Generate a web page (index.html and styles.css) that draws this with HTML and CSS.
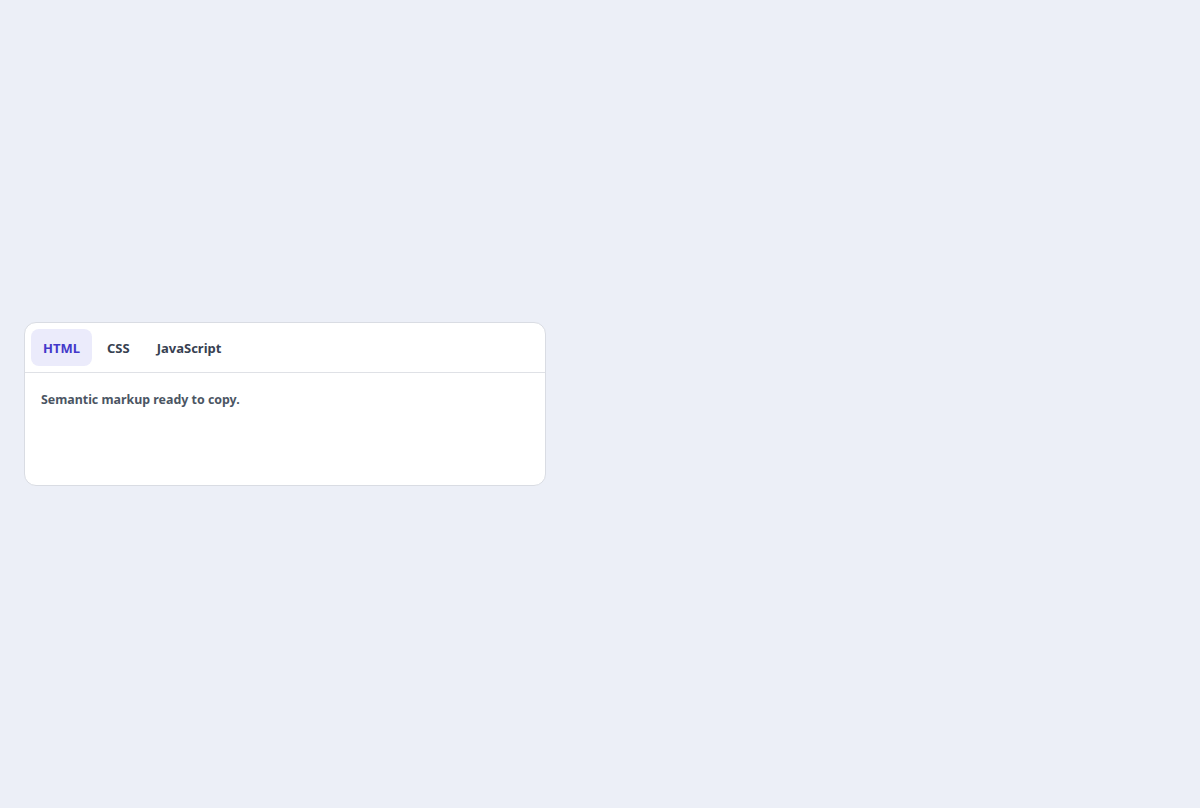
FILE: index.html
```html
<!DOCTYPE html>
<html lang="en">
<head>
<meta charset="utf-8">
<title>Tabs</title>
<link rel="stylesheet" href="styles.css">
</head>
<body>
<div class="card">
  <div class="tabs" role="tablist">
    <button class="tab active" role="tab" aria-selected="true">HTML</button>
    <button class="tab" role="tab">CSS</button>
    <button class="tab" role="tab">JavaScript</button>
  </div>
  <div class="panel" role="tabpanel">
    <p class="panel-text">Semantic markup ready to copy.</p>
  </div>
</div>
</body>
</html>
```
FILE: styles.css
```css
html, body {
  margin: 0;
  height: 100%;
}
body {
  background: #eceff7;
  font-family: "Noto Sans", sans-serif;
  display: flex;
  align-items: center;
  padding: 0 24px;
  box-sizing: border-box;
}
.card {
  width: 522px;
  height: 164px;
  box-sizing: border-box;
  background: #ffffff;
  border: 1px solid #d9dce3;
  border-radius: 12px;
  display: flex;
  flex-direction: column;
}
.tabs {
  display: flex;
  gap: 3px;
  padding: 6px;
  border-bottom: 1px solid #dfe1e6;
}
.tab {
  font-family: inherit;
  font-size: 13px;
  font-weight: 700;
  color: #374151;
  background: transparent;
  border: 0;
  border-radius: 8px;
  padding: 0 12px;
  height: 37px;
  cursor: pointer;
}
.tab.active {
  background: #ebebfb;
  color: #4338ca;
}
.panel {
  padding: 18px 16px;
}
.panel-text {
  margin: 0;
  font-size: 12.4px;
  font-weight: 700;
  color: #4b5563;
}
```
